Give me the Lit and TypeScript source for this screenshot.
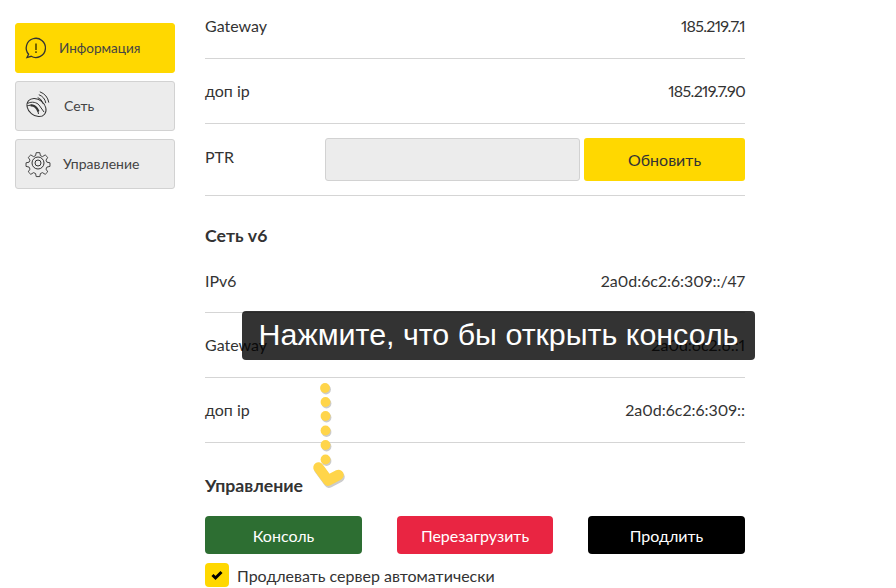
import { LitElement, html, css, svg } from "lit";
import { customElement } from "lit/decorators.js";

const dots = [
  [325, 388],
  [325.5, 402],
  [325.5, 416],
  [325.5, 430.5],
  [325.5, 445],
  [325.5, 459.5],
];

const chevron = "M318.500 467.500 L328 480.500 L338.500 475";

@customElement("app-root")
export class AppRoot extends LitElement {
  static styles = css`
    :host {
      display: block;
      position: relative;
      width: 896px;
      height: 588px;
      overflow: hidden;
      background: #fff;
      color: #333;
      font-family: "Lato", "Liberation Sans", sans-serif;
      font-size: 16px;
      font-variant-numeric: proportional-nums;
      font-feature-settings: "pnum";
    }
    .page {
      display: flex;
      align-items: flex-start;
      gap: 30px;
      padding-left: 15px;
    }
    .side {
      width: 160px;
      display: flex;
      flex-direction: column;
      gap: 8px;
      padding-top: 23px;
    }
    .tab {
      height: 50px;
      box-sizing: border-box;
      display: flex;
      align-items: center;
      background: #ececec;
      border: 1px solid #d2d2d2;
      border-radius: 3px;
      padding: 0 0 2px 9px;
      font-size: 14px;
      color: #444;
    }
    .tab.active {
      background: #ffd800;
      border-color: #ffd800;
      font-size: 13.5px;
      padding-bottom: 1px;
    }
    .tab svg {
      width: 26px;
      height: 26px;
      flex: none;
      fill: none;
      stroke: #333;
      overflow: visible;
    }
    .tab span {
      margin-left: 12px;
    }
    .tab.active span {
      margin-left: 8px;
    }
    .tab.net span {
      margin-left: 13px;
    }
    .main {
      width: 540px;
      margin-top: -6px;
    }
    .row {
      height: 65px;
      box-sizing: border-box;
      display: flex;
      align-items: center;
      justify-content: space-between;
      border-bottom: 1px solid #d5d5d5;
      padding-bottom: 2px;
    }
    .row.short {
      height: 63px;
    }
    .tight {
      letter-spacing: -0.7px;
    }
    .ptr {
      height: 72px;
      box-sizing: border-box;
      display: flex;
      align-items: flex-start;
      border-bottom: 1px solid #d5d5d5;
      padding-top: 14px;
    }
    .ptr label {
      width: 120px;
      padding-top: 9px;
    }
    .ptr .field {
      width: 255px;
      height: 43px;
      box-sizing: border-box;
      background: #ececec;
      border: 1px solid #d2d2d2;
      border-radius: 3px;
    }
    .ptr button {
      margin-left: 4px;
      width: 161px;
      height: 43px;
      background: #ffd800;
      color: #333;
      border: 0;
      border-radius: 3px;
      font: inherit;
    }
    h2 {
      margin: 0;
      font-size: 17.7px;
      font-weight: 700;
      color: #333;
      line-height: 20px;
    }
    .h-net {
      padding-top: 30px;
      height: 54px;
      box-sizing: border-box;
    }
    .h-manage {
      padding-top: 33px;
      height: 73px;
      box-sizing: border-box;
    }
    .actions {
      display: flex;
      justify-content: space-between;
    }
    .actions button {
      width: 157px;
      height: 38px;
      border: 0;
      border-radius: 4px;
      color: #fff;
      font: inherit;
    }
    .actions .reboot {
      width: 156px;
      background: #e92542;
    }
    .console {
      background: #2d6e32;
    }
    .renew {
      background: #000;
    }
    .auto {
      display: flex;
      align-items: center;
      gap: 8px;
      margin-top: 9px;
    }
    .check {
      width: 24px;
      height: 24px;
      border-radius: 4px;
      background: #ffd800;
      display: flex;
      align-items: center;
      justify-content: center;
    }
    .tip {
      position: absolute;
      left: 242px;
      top: 311px;
      width: 513px;
      height: 49px;
      background: rgba(0, 0, 0, 0.8);
      border-radius: 4px;
      color: #fff;
      font: 30.400px/47px "Liberation Sans", Arial, sans-serif;
      text-align: center;
      white-space: nowrap;
    }
    .arrow {
      position: absolute;
      left: 0;
      top: 0;
      pointer-events: none;
    }
  `;

  row(name: string, value: string, short = false, tight = false) {
    return html`<div class="row ${short ? "short" : ""}">
      <span>${name}</span><span class=${tight ? "tight" : ""}>${value}</span>
    </div>`;
  }

  render() {
    return html`
      <div class="page">
        <nav class="side">
          <div class="tab active">
            <svg viewBox="0 0 26 26" stroke-width="1.300">
              <path d="M3.600 19.200 L2 22.500 L6.200 21.300 A9.600 9.600 0 1 0 3.600 19.200 Z" />
              <path d="M11 8.500 V15 M11 16.300 V18" stroke="#5c5000" stroke-width="1.700" />
            </svg>
            <span>Информация</span>
          </div>
          <div class="tab net">
            <svg viewBox="0 0 26 26" stroke-width="1">
              <ellipse cx="11.500" cy="15.500" rx="10.500" ry="8" transform="rotate(40 11.500 15.500)" />
              <path d="M2.500 11.500 C7 9 12 10.500 14 13 L19 20 M2 14 C7 12 11 14 12.500 17 L13.500 22" />
              <path d="M5.500 13.500 C9 13 11.500 15 13.500 19.500" stroke-width="2.200" />
              <path d="M12.700 5.500 A8 8 0 0 1 17.900 11.600 M13.800 2.700 A11 11 0 0 1 20.800 11.100 M14.800 -.2 A14 14 0 0 1 23.800 10.600" />
            </svg>
            <span>Сеть</span>
          </div>
          <div class="tab">
            <svg viewBox="0 0 26 26" stroke-width="1">
              <path d="M11 1.500h4l.7 3.400 2.300 1 3-1.900 2.800 2.800-1.900 3 1 2.300 3.400.7v4l-3.400.7-1 2.300 1.900 3-2.800 2.800-3-1.900-2.300 1-.7 3.400h-4l-.7-3.400-2.300-1-3 1.900-2.800-2.800 1.900-3-1-2.300-3.400-.7v-4l3.400-.7 1-2.300-1.900-3 2.800-2.800 3 1.900 2.300-1z" transform="translate(1.300 1.300) scale(.9)" stroke-linejoin="round" />
              <circle cx="13" cy="13" r="6" />
              <circle cx="13" cy="13" r="3" />
            </svg>
            <span>Управление</span>
          </div>
        </nav>
        <main class="main">
          ${this.row("Gateway", "185.219.7.1", false, true)}
          ${this.row("доп ip", "185.219.7.90", false, true)}
          <div class="ptr">
            <label>PTR</label>
            <div class="field"></div>
            <button>Обновить</button>
          </div>
          <h2 class="h-net">Сеть v6</h2>
          ${this.row("IPv6", "2a0d:6c2:6:309::/47", true)}
          ${this.row("Gateway", "2a0d:6c2:6::1")} ${this.row("доп ip", "2a0d:6c2:6:309::")}
          <h2 class="h-manage">Управление</h2>
          <div class="actions">
            <button class="console">Консоль</button>
            <button class="reboot">Перезагрузить</button>
            <button class="renew">Продлить</button>
          </div>
          <div class="auto">
            <div class="check">
              <svg width="14" height="12" viewBox="0 0 14 12">
                <path d="M2.500 6 L5.500 9 L11.500 3" fill="none" stroke="#000" stroke-width="3" />
              </svg>
            </div>
            <span>Продлевать сервер автоматически</span>
          </div>
        </main>
      </div>
      <div class="tip">Нажмите, что бы открыть консоль</div>
      <svg class="arrow" width="896" height="588">
        ${dots.map(
          ([x, y]) => svg`<circle cx=${x + 1} cy=${y + 1.5} r="4.900" fill="#ccc" />
            <circle cx=${x} cy=${y} r="4.900" fill="#ffd54a" />`
        )}
        <path d=${chevron} fill="none" stroke="#ccc" stroke-width="10.500" stroke-linecap="round" stroke-linejoin="round" transform="translate(1 2)" />
        <path d=${chevron} fill="none" stroke="#ffd54a" stroke-width="10.500" stroke-linecap="round" stroke-linejoin="round" />
      </svg>
    `;
  }
}

declare global {
  interface HTMLElementTagNameMap {
    "app-root": AppRoot;
  }
}
